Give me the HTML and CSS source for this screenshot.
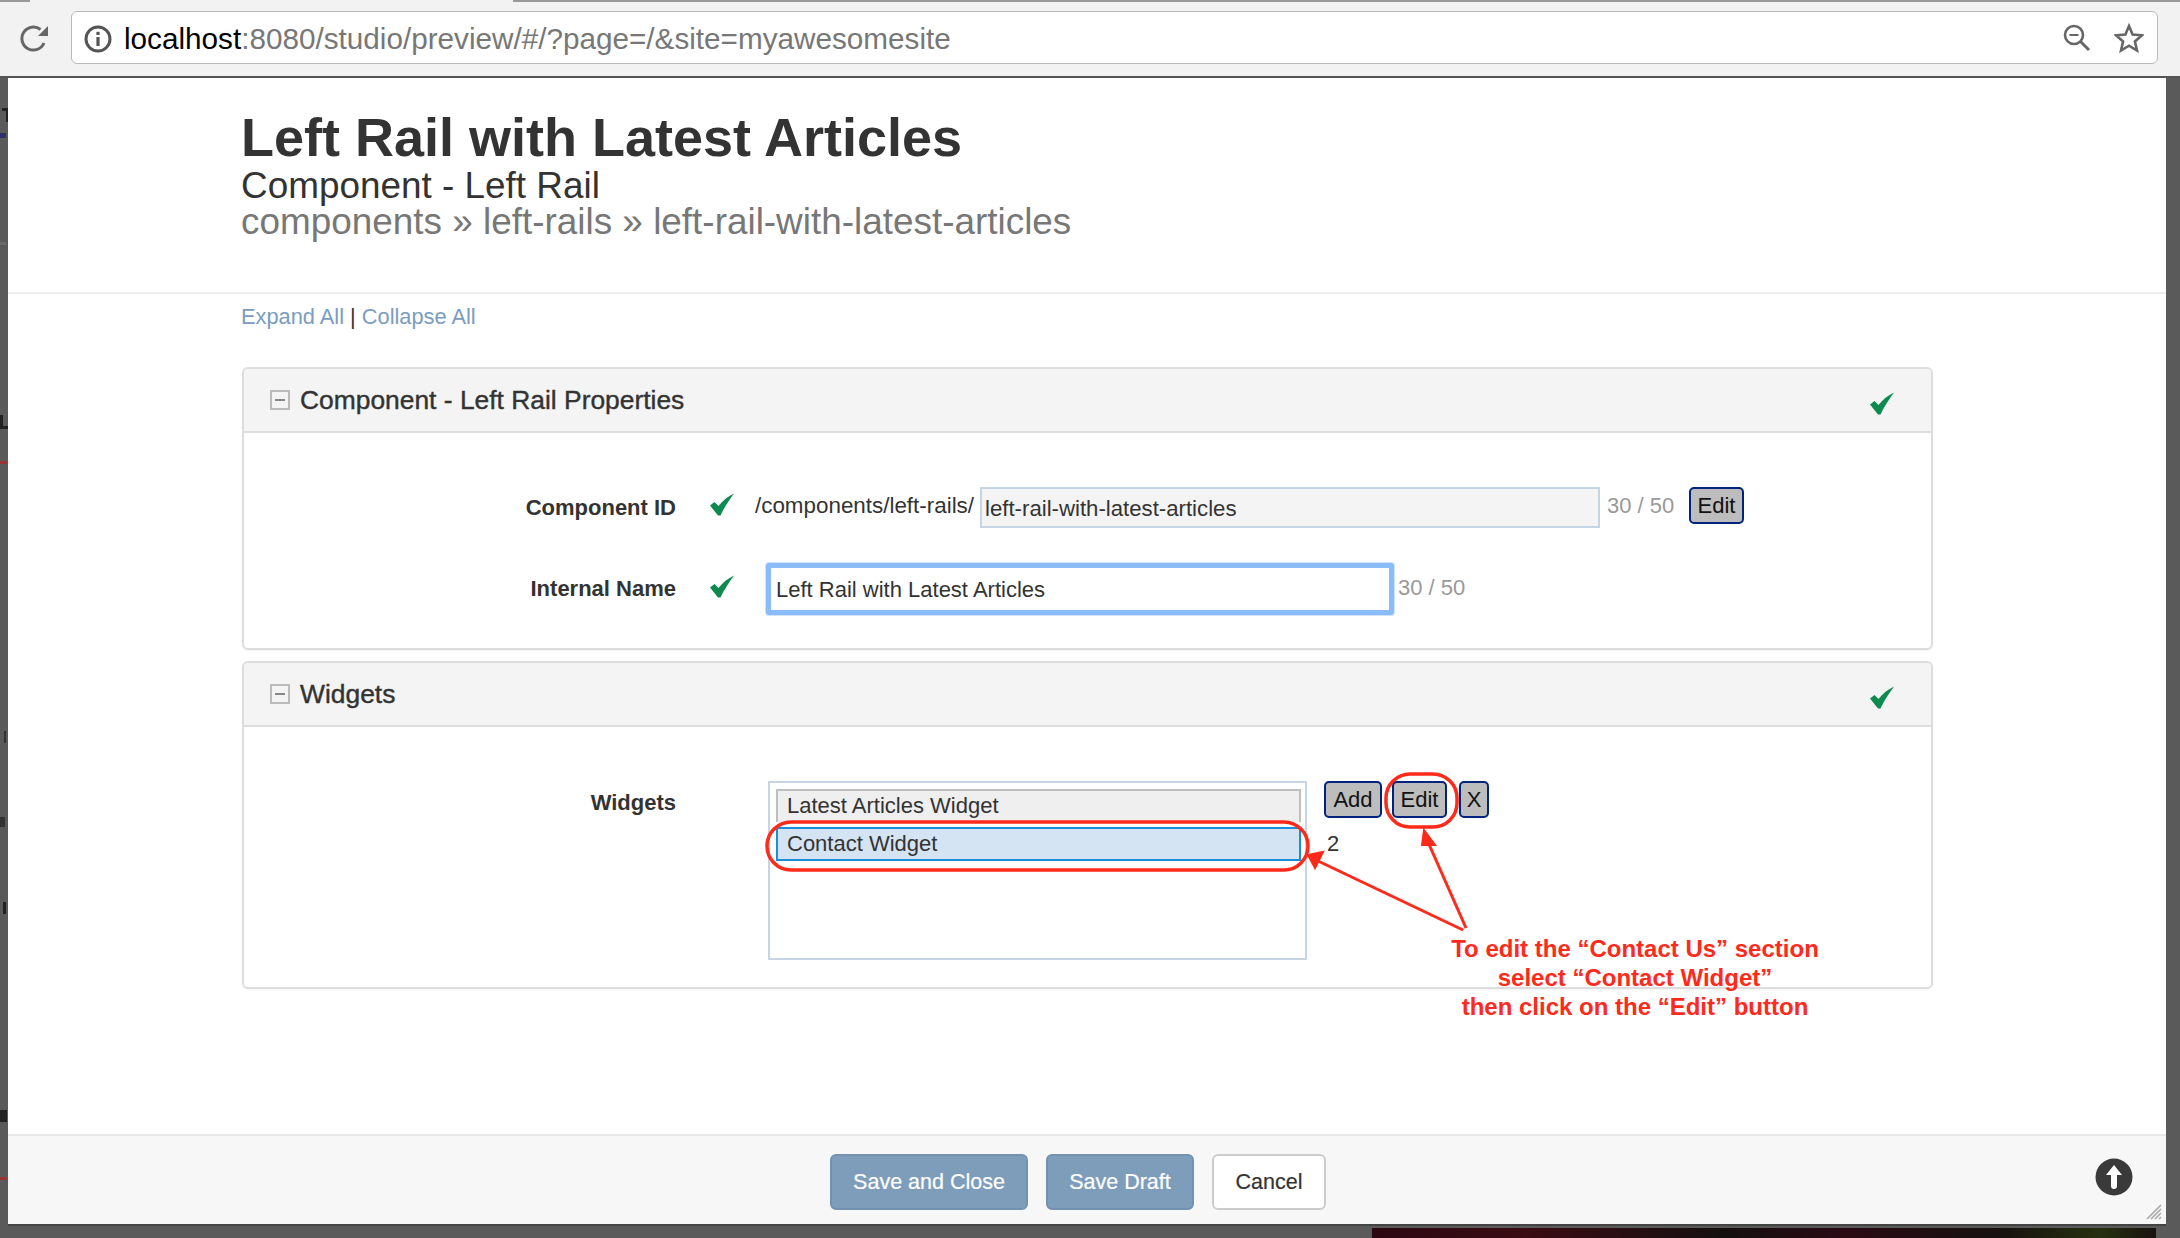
FILE: index.html
```html
<!DOCTYPE html>
<html lang="en">
<head>
  <meta charset="UTF-8">
  <title>Left Rail with Latest Articles</title>
  <link rel="stylesheet" href="styles.css">
</head>
<body>
  <div class="tab-edge">
    <span class="tab-edge-left"></span>
    <span class="tab-edge-right"></span>
  </div>
  <div class="toolbar">
    <svg class="reload" width="30" height="30" viewBox="0 0 30 30">
      <path d="M25 20A11.5 11.5 0 1 1 21.5 6.5" fill="none" stroke="#666" stroke-width="3"/>
      <path d="M29 3V13H19Z" fill="#666"/>
    </svg>
    <div class="address">
      <svg class="info" width="28" height="28" viewBox="0 0 28 28">
        <circle cx="14" cy="14" r="12" fill="none" stroke="#555" stroke-width="3"/>
        <rect x="12.4" y="12" width="3.2" height="9" fill="#555"/>
        <rect x="12.4" y="6.8" width="3.2" height="3.2" fill="#555"/>
      </svg>
      <div class="url">localhost<span class="url-rest">:8080/studio/preview/#/?page=/&amp;site=myawesomesite</span></div>
      <svg class="zoom-out" width="30" height="30" viewBox="0 0 30 30">
        <circle cx="12" cy="12" r="9" fill="none" stroke="#666" stroke-width="2.6"/>
        <path d="M7.5 12H16.5" stroke="#666" stroke-width="2"/>
        <path d="M18.5 18.5L27 27" stroke="#666" stroke-width="3"/>
      </svg>
      <svg class="star" width="30" height="30" viewBox="0 0 30 30">
        <path d="M15 3L18.6 11.5 28 12.3 20.9 18.4 23 27.5 15 22.7 7 27.5 9.1 18.4 2 12.3 11.4 11.5Z" fill="none" stroke="#666" stroke-width="2.6"/>
      </svg>
    </div>
  </div>

  <div class="stage">
    <div class="modal">
      <div class="modal-head">
        <h1>Left Rail with Latest Articles</h1>
        <h2>Component - Left Rail</h2>
        <div class="crumbs">components » left-rails » left-rail-with-latest-articles</div>
      </div>

      <div class="modal-body">
        <div class="toggle-links"><a href="#">Expand All</a> | <a href="#">Collapse All</a></div>

        <div class="panel">
          <div class="panel-head">
            <span class="minus"></span>
            <span class="panel-title">Component - Left Rail Properties</span>
            <svg class="check check-head" viewBox="0 0 25 22"><path d="M0 12L4.5 8.5 8.5 12.5C12.5 7 18 3 24 0 19 7 14 14 10.5 22H8Z"/></svg>
          </div>
          <div class="panel-body props">
            <div class="row row-id">
              <label>Component ID</label>
              <svg class="check" viewBox="0 0 25 22"><path d="M0 12L4.5 8.5 8.5 12.5C12.5 7 18 3 24 0 19 7 14 14 10.5 22H8Z"/></svg>
              <span class="path-prefix">/components/left-rails/</span>
              <div class="field field-locked">left-rail-with-latest-articles</div>
              <span class="count">30 / 50</span>
              <button class="mini edit-id">Edit</button>
            </div>
            <div class="row row-name">
              <label>Internal Name</label>
              <svg class="check" viewBox="0 0 25 22"><path d="M0 12L4.5 8.5 8.5 12.5C12.5 7 18 3 24 0 19 7 14 14 10.5 22H8Z"/></svg>
              <div class="field field-focus">Left Rail with Latest Articles</div>
              <span class="count count-name">30 / 50</span>
            </div>
          </div>
        </div>

        <div class="panel">
          <div class="panel-head">
            <span class="minus"></span>
            <span class="panel-title">Widgets</span>
            <svg class="check check-head" viewBox="0 0 25 22"><path d="M0 12L4.5 8.5 8.5 12.5C12.5 7 18 3 24 0 19 7 14 14 10.5 22H8Z"/></svg>
          </div>
          <div class="panel-body widgets">
            <div class="row row-widgets">
              <label>Widgets</label>
              <div class="listbox">
                <div class="list-item">Latest Articles Widget</div>
                <div class="list-item selected">Contact Widget</div>
              </div>
              <div class="list-side">
                <div class="list-buttons">
                  <button class="mini btn-add">Add</button>
                  <button class="mini btn-edit">Edit</button>
                  <button class="mini btn-x">X</button>
                </div>
                <div class="list-count">2</div>
              </div>
            </div>
          </div>
        </div>
      </div>

      <div class="modal-foot">
        <button class="btn primary save-close">Save and Close</button>
        <button class="btn primary save-draft">Save Draft</button>
        <button class="btn cancel">Cancel</button>
        <svg class="to-top" width="38" height="38" viewBox="0 0 38 38">
          <circle cx="19" cy="19" r="18.5" fill="#3a3a3a"/>
          <path d="M19 7L27 17H22V28A3 3 0 0 1 16 28V17H11Z" fill="#fff"/>
        </svg>
        <svg class="grip" width="16" height="16" viewBox="0 0 16 16">
          <path d="M1 15L15 1M5 15L15 5M9 15L15 9M13 15L15 13" stroke="#aaa" stroke-width="1.6"/>
        </svg>
      </div>
    </div>
  </div>
  <div class="behind"></div>

  <svg class="edge-marks" width="8" height="1238" viewBox="0 0 8 1238">
    <rect x="2" y="108" width="6" height="3" fill="#222"/>
    <rect x="6" y="108" width="2" height="14" fill="#222"/>
    <rect x="0" y="133" width="6" height="5" fill="#2f2f6a"/>
    <rect x="0" y="242" width="6" height="3" fill="#6a6a6a"/>
    <rect x="0" y="415" width="3" height="13" fill="#222"/>
    <rect x="0" y="426" width="8" height="3" fill="#222"/>
    <rect x="0" y="461" width="7" height="3" fill="#9a3434"/>
    <rect x="4" y="731" width="2" height="12" fill="#333"/>
    <rect x="0" y="817" width="5" height="10" fill="#333"/>
    <rect x="3" y="902" width="3" height="12" fill="#222"/>
    <rect x="0" y="1110" width="7" height="12" fill="#222"/>
    <rect x="0" y="1177" width="7" height="3" fill="#9a3434"/>
  </svg>

  <svg class="callouts" width="2180" height="1238" viewBox="0 0 2180 1238">
    <rect x="767" y="822" width="541" height="48" rx="24" fill="none" stroke="#ff2a1a" stroke-width="3.5"/>
    <rect x="1386" y="774" width="71" height="53" rx="24" fill="none" stroke="#ff2a1a" stroke-width="3.5"/>
    <path d="M1463 930L1318 861" stroke="#ff2a1a" stroke-width="3"/>
    <path d="M1466 928L1428 842" stroke="#ff2a1a" stroke-width="3"/>
    <path d="M1308 855L1323 852 1315 868Z" fill="#ff2a1a" stroke="#ff2a1a" stroke-width="2"/>
    <path d="M1424 830L1435 845 1422 845Z" fill="#ff2a1a" stroke="#ff2a1a" stroke-width="2"/>
  </svg>
  <div class="callout-text">To edit the “Contact Us” section<br>select “Contact Widget”<br>then click on the “Edit” button</div>
</body>
</html>
```

FILE: styles.css
```css
* {
  box-sizing: border-box;
}
html, body {
  height: 1238px;
}
body {
  margin: 0;
  font-family: "Liberation Sans", Arial, sans-serif;
  font-size: 22px;
  color: #333;
  background: #5a5a5a;
  overflow: hidden;
  position: relative;
}

/* browser chrome */
.tab-edge {
  height: 2px;
  display: flex;
  justify-content: space-between;
  background: #f2f2f2;
}
.tab-edge-left {
  width: 30px;
  background: #999;
}
.tab-edge-right {
  width: 1667px;
  background: #999;
}
.toolbar {
  height: 76px;
  background: #f2f2f2;
  border-bottom: 2px solid #555;
  display: flex;
  align-items: flex-start;
  padding: 9px 22px 0 19px;
}
.reload {
  margin: 12px 22px 0 0;
  flex: none;
}
.address {
  flex: 1;
  height: 53px;
  background: #fff;
  border: 1px solid #b9b9b9;
  border-radius: 6px;
  display: flex;
  align-items: center;
  padding: 0 13px 0 12px;
}
.info {
  flex: none;
  margin: 3px 12px 0 0;
}
.url {
  flex: 1;
  font-size: 29.7px;
  padding-top: 2px;
  color: #000;
  white-space: nowrap;
}
.url-rest {
  color: #777;
}
.zoom-out {
  margin-right: 22px;
}

/* modal */
.stage {
  height: 1148px;
  padding-left: 8px;
}
.modal {
  width: 2158px;
  height: 1148px;
  background: #fff;
  display: flex;
  flex-direction: column;
  border-bottom: 2px solid #444;
}
.modal-head {
  height: 216px;
  padding: 29px 0 0 233px;
  border-bottom: 2px solid #eee;
}
h1 {
  margin: 0;
  font-size: 54px;
  line-height: 61px;
  font-weight: bold;
  color: #333;
}
h2 {
  margin: 0;
  font-size: 36.9px;
  line-height: 36px;
  font-weight: normal;
  color: #333;
}
.crumbs {
  font-size: 36.9px;
  line-height: 36px;
  color: #777;
}
.modal-body {
  flex: 1;
  padding: 10px 233px 0 234px;
}
.toggle-links {
  height: 63px;
  line-height: 26px;
  margin-left: -1px;
  color: #333;
  font-size: 21.8px;
}
.toggle-links a {
  color: #7b9cbf;
  text-decoration: none;
}

/* panels */
.panel {
  border: 2px solid #ddd;
  border-radius: 6px;
  margin-bottom: 11px;
  box-shadow: 0 1px 2px rgba(0,0,0,0.05);
}
.panel-head {
  height: 64px;
  background: #f4f4f4;
  border-bottom: 2px solid #ddd;
  border-radius: 4px 4px 0 0;
  display: flex;
  align-items: center;
  padding: 0 36px 0 26px;
}
.minus {
  width: 20px;
  height: 20px;
  border: 2px solid #bbb;
  margin-right: 10px;
  position: relative;
}
.minus::after {
  content: "";
  position: absolute;
  left: 3px;
  top: 7px;
  width: 10px;
  height: 2px;
  background: #888;
}
.panel-title {
  flex: 1;
  font-size: 26.4px;
  color: #333;
  -webkit-text-stroke: 0.4px #333;
}
.check {
  width: 25px;
  height: 23px;
  fill: #0d8a4f;
  flex: none;
}
.check-head {
  margin-top: 6px;
}
.props {
  height: 215px;
  padding-top: 54px;
}
.widgets {
  height: 260px;
  padding-top: 54px;
}
.row {
  display: flex;
  align-items: flex-start;
}
.row label {
  width: 432px;
  flex: none;
  text-align: right;
  font-weight: bold;
  margin-top: 8px;
  color: #333;
}
.row .check {
  margin: 6px 0 0 34px;
}
.row-id {
  height: 76px;
}
.row-name label {
  margin-top: 13px;
}
.row-name .check {
  margin-top: 12px;
}
.path-prefix {
  margin: 6px 4px 0 20px;
  width: 221px;
  font-size: 22.4px;
  white-space: nowrap;
}
.field {
  height: 41px;
  line-height: 37px;
  padding: 0 3px;
  border: 2px solid #c5d5e3;
  white-space: nowrap;
}
.field-locked {
  width: 620px;
  background: #f4f4f4;
  line-height: 39px;
  font-size: 22.2px;
}
.field-focus {
  width: 628px;
  height: 52px;
  margin: 0 0 0 31px;
  line-height: 43px;
  padding: 0 5px;
  border: 5px solid #8abcf9;
  border-radius: 3px;
  box-shadow: 0 0 0 1px #cfe4fb;
  background: #fff;
}
.count {
  color: #999;
  margin: 6px 0 0 7px;
  white-space: nowrap;
  width: 68px;
}
.count-name {
  margin: 12px 0 0 4px;
}
.mini {
  height: 37px;
  padding: 0;
  font-family: inherit;
  font-size: 22px;
  color: #111;
  background: #bdbdbd;
  border: 2px solid #00247d;
  border-radius: 5px;
}
.edit-id {
  width: 55px;
  margin-left: 14px;
}

/* widget list */
.row-widgets label {
  margin-top: 6px;
  line-height: 32px;
}
.listbox {
  width: 539px;
  height: 179px;
  margin-left: 92px;
  border: 2px solid #c5d5e3;
  padding: 6px 4px 0 6px;
}
.list-item {
  height: 33px;
  line-height: 29px;
  padding-left: 9px;
  background: #efefef;
  border: 2px solid #bfbfbf;
  border-bottom-width: 0;
  margin-bottom: 5px;
}
.list-item.selected {
  height: 34px;
  background: #d4e4f2;
  border: 2px solid #1a8fd8;
  margin-bottom: 0;
}
.list-side {
  margin-left: 17px;
}
.list-buttons {
  display: flex;
}
.btn-add {
  width: 58px;
}
.btn-edit {
  width: 55px;
  margin-left: 10px;
}
.btn-x {
  width: 30px;
  margin-left: 12px;
}
.list-count {
  margin: 13px 0 0 3px;
}

/* footer */
.modal-foot {
  height: 90px;
  flex: none;
  background: #f7f7f7;
  border-top: 2px solid #e8e8e8;
  display: flex;
  align-items: flex-start;
  padding: 18px 0 0 822px;
  position: relative;
}
.btn {
  height: 56px;
  font-family: inherit;
  font-size: 21.5px;
  -webkit-text-stroke: 0.2px currentColor;
  border-radius: 6px;
  padding: 0;
}
.primary {
  background: #7e9dbb;
  border: 2px solid #7392b2;
  color: #fff;
}
.save-close {
  width: 198px;
}
.save-draft {
  width: 148px;
  margin-left: 18px;
}
.cancel {
  width: 114px;
  margin-left: 18px;
  background: #fff;
  border: 2px solid #ccc;
  color: #333;
}
.to-top {
  position: absolute;
  left: 2087px;
  top: 22px;
}
.grip {
  position: absolute;
  right: 4px;
  bottom: 4px;
}
.behind {
  position: absolute;
  left: 1372px;
  top: 1228px;
  width: 784px;
  height: 10px;
  background: linear-gradient(90deg, #2c0812 0%, #3a0c14 20%, #141010 45%, #2a0a14 60%, #161210 80%, #26300f 93%, #181210 100%);
}

/* annotations on top of the screenshot */
.edge-marks {
  position: absolute;
  left: 0;
  top: 0;
}
.callouts {
  position: absolute;
  left: 0;
  top: 0;
  pointer-events: none;
}
.callout-text {
  position: absolute;
  left: 1385px;
  top: 934px;
  width: 500px;
  text-align: center;
  font-size: 24px;
  font-weight: bold;
  line-height: 29px;
  color: #ff2a1a;
}
```
